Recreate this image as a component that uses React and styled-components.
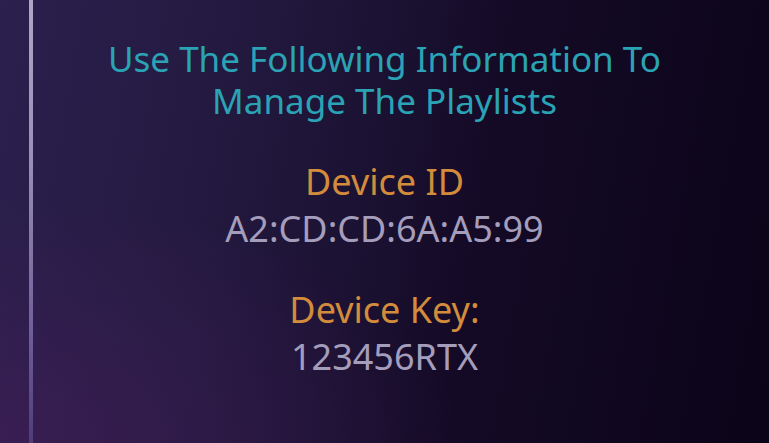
import React from "react";
import styled, { createGlobalStyle } from "styled-components";

const Global = createGlobalStyle`
  html, body, #root { margin: 0; padding: 0; height: 100%; }
  body {
    overflow: hidden;
    background: #150b26;
    font-family: "Noto Sans", "Open Sans", sans-serif;
  }
`;

const Page = styled.div`
  display: flex;
  width: 769px;
  height: 443px;
  background:
    radial-gradient(ellipse 60% 55% at 0% 100%, rgba(66, 30, 88, 0.65), rgba(66, 30, 88, 0) 100%),
    linear-gradient(100deg, #2b204e 0%, #23193f 30%, #140a26 62%, #0b0418 100%);
`;

const Rail = styled.div`
  flex: 0 0 4px;
  margin-left: 29px;
  background: linear-gradient(180deg, #aea6c6 0%, #9a90b8 35%, #6f5f98 75%, #4f3d78 100%);
`;

const Content = styled.main`
  flex: 1;
  margin-right: 33px;
  display: flex;
  flex-direction: column;
  align-items: center;
  padding-top: 38px;
  text-align: center;
`;

const Title = styled.h1`
  margin: 0;
  font-weight: 400;
  font-size: 35px;
  line-height: 42px;
  color: #2aa3b4;
`;

const TitleLine = styled.span`
  display: block;
`;

const Field = styled.section`
  display: flex;
  flex-direction: column;
  align-items: center;
  margin-top: ${(p) => p.$gap}px;
`;

const Label = styled.div`
  font-size: 36px;
  line-height: 47px;
  color: #d38b3c;
`;

const Value = styled.div`
  font-size: 36px;
  line-height: 47px;
  color: #a49dbb;
`;

export default function App() {
  return (
    <>
      <Global />
      <Page>
        <Rail />
        <Content>
          <Title>
            <TitleLine>Use The Following Information To</TitleLine>
            <TitleLine>Manage The Playlists</TitleLine>
          </Title>
          <Field $gap={36}>
            <Label>Device ID</Label>
            <Value>A2:CD:CD:6A:A5:99</Value>
          </Field>
          <Field $gap={34}>
            <Label>Device Key:</Label>
            <Value>123456RTX</Value>
          </Field>
        </Content>
      </Page>
    </>
  );
}
